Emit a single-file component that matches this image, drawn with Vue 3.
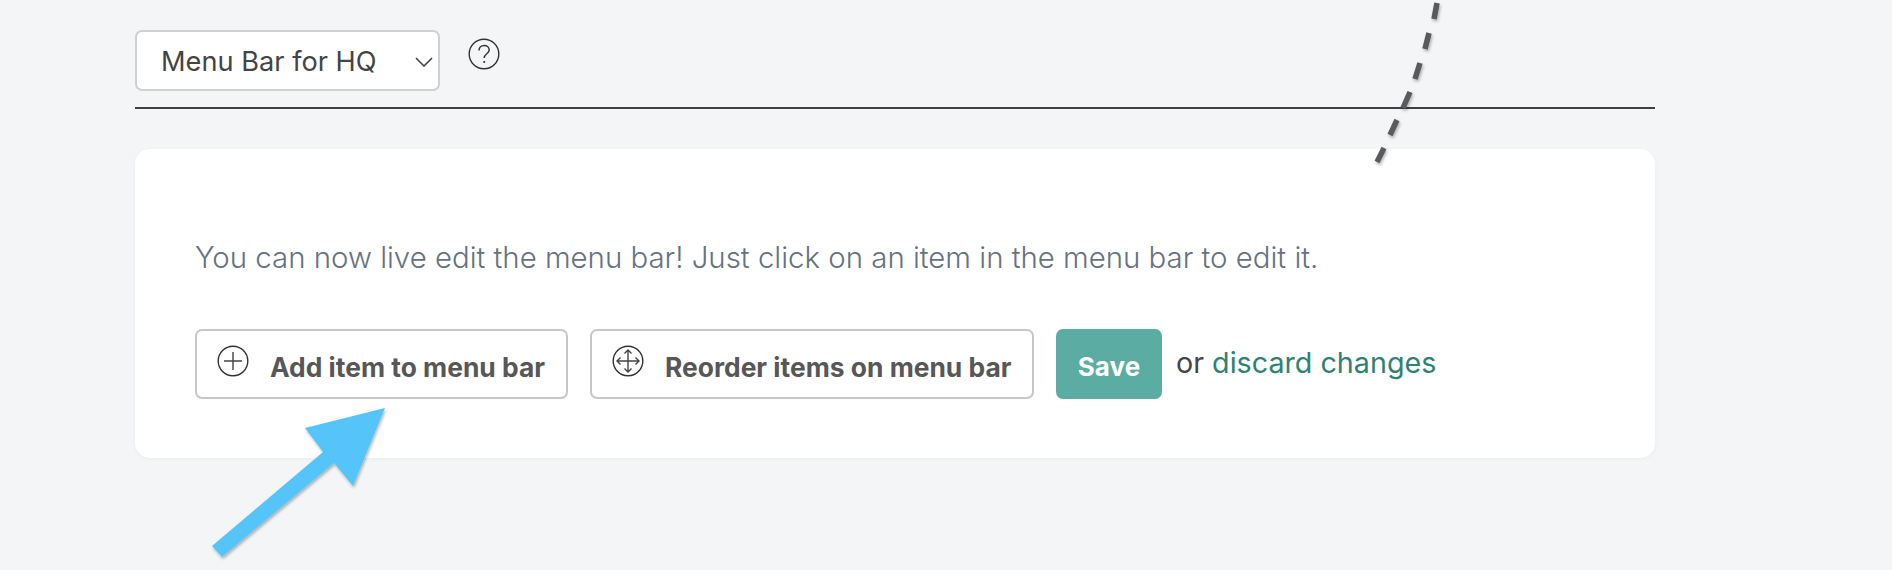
<script setup>
const dashes = [
  [1437, 3, 1434, 19],
  [1429, 33, 1425, 49],
  [1420, 63, 1415, 79],
  [1410, 92, 1403, 108],
  [1397, 120, 1390, 135],
  [1384, 148, 1377, 162],
]
</script>

<template>
  <div class="page">
    <div class="toolbar">
      <div class="select">
        <span class="select-label">Menu Bar for HQ</span>
        <svg class="chevron" width="18" height="10" viewBox="0 0 18 10"><path d="M1 1l8 8 8-8" fill="none" stroke="#444" stroke-width="1.6"/></svg>
      </div>
      <svg class="help" width="32" height="32" viewBox="0 0 32 32">
        <circle cx="16" cy="16" r="14.8" fill="none" stroke="#333" stroke-width="1.4"/>
        <path d="M11 12.5c0-3 2.300-5 5.200-5 2.900 0 5 1.900 5 4.500 0 3.800-5 3.800-5 8" fill="none" stroke="#333" stroke-width="1.5"/>
        <circle cx="16.200" cy="24" r="1.100" fill="#333"/>
      </svg>
    </div>
    <div class="card">
      <p class="intro">You can now live edit the menu bar! Just click on an item in the menu bar to edit it.</p>
      <div class="actions">
        <button class="btn add">
          <svg width="32" height="32" viewBox="0 0 32 32">
            <circle cx="16" cy="16" r="14.800" fill="none" stroke="#333" stroke-width="1.400"/>
            <path d="M16 7v18M7 16h18" fill="none" stroke="#444" stroke-width="1.400"/>
          </svg>
          <span>Add item to menu bar</span>
        </button>
        <button class="btn reorder">
          <svg width="32" height="32" viewBox="0 0 32 32">
            <circle cx="16" cy="16" r="14.800" fill="none" stroke="#333" stroke-width="1.400"/>
            <path d="M16 5v22M5 16h22M12.500 8.500L16 5l3.500 3.500M12.500 23.500L16 27l3.500-3.500M8.500 12.500L5 16l3.500 3.500M23.500 12.500L27 16l-3.500 3.500" fill="none" stroke="#444" stroke-width="1.400"/>
          </svg>
          <span>Reorder items on menu bar</span>
        </button>
        <button class="save">Save</button>
        <span class="or">or <a class="discard">discard changes</a></span>
      </div>
    </div>
    <svg class="overlay" width="1892" height="570" viewBox="0 0 1892 570">
      <defs>
        <filter id="soft" x="-20%" y="-20%" width="140%" height="140%">
          <feDropShadow dx="1" dy="2" stdDeviation="1.500" flood-color="#000" flood-opacity="0.3"/>
        </filter>
      </defs>
      <g filter="url(#soft)" stroke="#5a5a5c" stroke-width="5.500">
        <line v-for="(d, i) in dashes" :key="i" :x1="d[0]" :y1="d[1]" :x2="d[2]" :y2="d[3]"/>
      </g>
      <polygon filter="url(#soft)" fill="#55c5f9" points="385,408 353,486 334,463 222,557 212,546 323,452 305,428"/>
    </svg>
  </div>
</template>

<style>
html, body { margin: 0; background: #f4f5f7; }
</style>

<style scoped>
.page {
  position: relative;
  width: 1892px;
  height: 570px;
  overflow: hidden;
  box-sizing: border-box;
  padding: 30px 237px 0 135px;
  background: #f4f5f7;
  font-family: Inter, "Liberation Sans", sans-serif;
}
.toolbar {
  display: flex;
  align-items: flex-start;
  height: 77px;
  border-bottom: 2px solid #3c3f44;
  box-sizing: content-box;
}
.select {
  width: 305px;
  height: 61px;
  box-sizing: border-box;
  border: 2px solid #cfd0d2;
  border-radius: 7px;
  background: #fff;
  display: flex;
  align-items: center;
  justify-content: space-between;
  padding: 0 5px 0 24px;
  font-size: 27.2px;
  color: #444;
}
.select-label { margin-top: 2px; }
.chevron { margin-top: 2px; }
.help { margin: 8px 0 0 28px; }
.card {
  margin-top: 40px;
  height: 309px;
  box-sizing: border-box;
  background: #fff;
  border-radius: 15px;
  padding: 92px 60px 0;
  box-shadow: 0 1px 4px rgba(0, 0, 0, 0.04);
}
.intro {
  margin: 0;
  font-size: 29.4px;
  line-height: 34px;
  color: #66727f;
  font-weight: 300;
  white-space: nowrap;
}
.actions {
  margin-top: 54px;
  display: flex;
  align-items: stretch;
  height: 70px;
}
.btn {
  display: flex;
  align-items: center;
  box-sizing: border-box;
  height: 70px;
  background: #fff;
  border: 2px solid #c6c7cb;
  border-radius: 7px;
  padding: 0 0 0 20px;
  font: 700 26.4px Inter, "Liberation Sans", sans-serif;
  color: #575757;
  white-space: nowrap;
}
.btn svg { margin-top: -6px; margin-right: 21px; flex: none; }
.btn span { margin-top: 6px; }
.add { width: 373px; }
.reorder { width: 444px; margin-left: 22px; }
.save {
  width: 106px;
  height: 70px;
  margin-left: 22px;
  border: 0;
  border-radius: 7px;
  background: #5bada3;
  color: #fff;
  font: 700 26px Inter, "Liberation Sans", sans-serif;
  padding-top: 6px;
}
.or {
  margin-left: 14px;
  margin-top: -4px;
  align-self: center;
  font-size: 28.7px;
  color: #444;
}
.discard { color: #2e8273; }
.overlay {
  position: absolute;
  left: 0;
  top: 0;
  pointer-events: none;
}
</style>
